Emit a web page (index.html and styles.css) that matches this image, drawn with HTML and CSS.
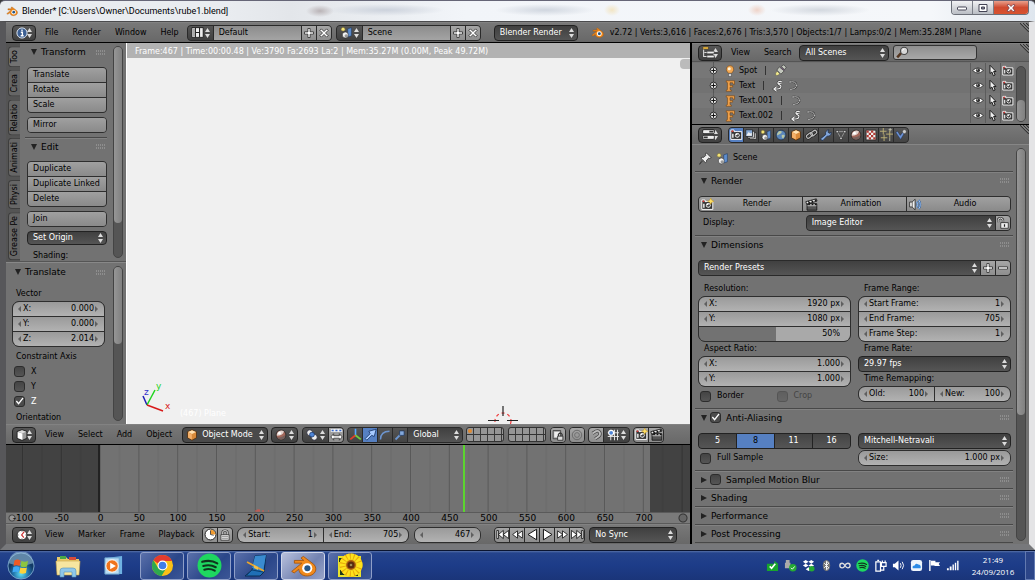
FILE: index.html
```html
<!DOCTYPE html>
<html lang="en">
<head>
<meta charset="utf-8">
<title>Blender* [C:\Users\Owner\Documents\rube1.blend]</title>
<link rel="stylesheet" href="styles.css">
</head>
<body>
<svg class="defs" aria-hidden="true">
  <symbol id="blender" viewBox="0 0 16 16"><path d="M1 11.500 7 6.600H2.600V5h5.600L6.500 3.600l1.400-1L14 7.200c3 3 .5 7-3.800 7-3 0-4.800-1.700-5-4l-2.700 2.200z" fill="#f08a1c" stroke="#a5530a" stroke-width=".5"/><circle cx="10.200" cy="9.600" r="3" fill="#fff"/><circle cx="10.300" cy="9.600" r="1.800" fill="#265787"/></symbol>
  <symbol id="info" viewBox="0 0 16 16"><circle cx="8" cy="8" r="6.800" fill="#3c5f93" stroke="#dfe7f2" stroke-width="1.300"/><path d="M8 3.300v2M6.400 7H8.500v4.500M6.200 11.700h4" stroke="#fff" stroke-width="1.800" fill="none"/></symbol>
  <symbol id="layout" viewBox="0 0 16 16"><path d="M1 2h14v12H1z" fill="#eee" stroke="#111"/><path d="M5.500 2v12M10.500 2v12M5.500 8h5" stroke="#222" stroke-width="1.300"/><path d="M2 3h3v10H2z" fill="#aaa"/></symbol>
  <symbol id="scene" viewBox="0 0 16 16"><path d="M9.500 3.500 14 2v10l-4.500 1.500z" fill="#5f8fd0" stroke="#223a60" stroke-width=".7"/><circle cx="6.500" cy="11" r="3.700" fill="#f4f4f4" stroke="#222" stroke-width=".7"/><circle cx="7.600" cy="12" r="2" fill="#999"/><circle cx="3.800" cy="4" r="2.300" fill="#f3e47a" stroke="#89792a" stroke-width=".6"/></symbol>
  <symbol id="plus" viewBox="0 0 16 16"><path d="M6.500 2h3v4.500H14v3H9.500V14h-3V9.500H2v-3h4.500z" fill="#fff" stroke="#222"/></symbol>
  <symbol id="minus" viewBox="0 0 16 16"><path d="M2 6.500h12v3H2z" fill="#fff" stroke="#222"/></symbol>
  <symbol id="cross" viewBox="0 0 16 16"><path d="m2.500 4.500 2-2L8 6l3.500-3.500 2 2L10 8l3.500 3.500-2 2L8 10l-3.500 3.500-2-2L6 8z" fill="#fff" stroke="#222"/></symbol>
  <symbol id="tree" viewBox="0 0 16 16"><path d="M2 3v10h4M3 8h4" stroke="#ddd" fill="none" stroke-width="1.300"/><path d="M1 1h7v3H1z" fill="#f0b93c" stroke="#222" stroke-width=".6"/><path d="M6 6.500h9v3H6zM6 11.500h9v3H6z" fill="#eee" stroke="#222" stroke-width=".6"/></symbol>
  <symbol id="search" viewBox="0 0 16 16"><path d="m1.500 14 5-5.500" stroke="#53341f" stroke-width="3"/><circle cx="10" cy="6" r="4.400" fill="#d7d7d7" stroke="#444" stroke-width="1.400"/><path d="M8 6q0-2 2-2.200" stroke="#fff" fill="none"/></symbol>
  <symbol id="node" viewBox="0 0 16 16"><circle cx="8" cy="8" r="6" fill="#ddd" stroke="#222" stroke-width="1.600"/><path d="M8 4v8M4 8h8" stroke="#111" stroke-width="1.800"/></symbol>
  <symbol id="lamp" viewBox="0 0 16 16"><path d="M8 .8a5 5 0 0 0-3.500 8.500L6 11h4l1.500-1.700A5 5 0 0 0 8 .8z" fill="#f2a955" stroke="#6f3f10" stroke-width=".7"/><circle cx="7" cy="5" r="2" fill="#fff3d5"/><path d="M6 11.500h4v3.700H6z" fill="#ddd" stroke="#333" stroke-width=".6"/></symbol>
  <symbol id="font" viewBox="0 0 16 16"><path d="M3 1h11v4.800h-1.700L11.500 3.600H8v3.600h3.500v2.300H8v3.300l1.800.7V15H3v-1.500l1.600-.7v-9.300L3 2.800z" fill="#eea04a" stroke="#6b3b0b" stroke-width=".7"/></symbol>
  <symbol id="spot" viewBox="0 0 16 16"><path d="M2 14q-1-3 2-5l3 3q-2 3-5 2z" fill="#f1e98c" stroke="#444" stroke-width=".5"/><path d="m3.500 7.500 3-4 6 5-4 4zM9 3l3-2 3 3-2 3z" fill="#c3c7bd" stroke="#333" stroke-width=".8"/><path d="m8 4 5 4" stroke="#637" stroke-width=".6"/></symbol>
  <symbol id="squig" viewBox="0 0 16 16"><path d="M13 2Q7 1 8 5q3 2 4 3 0 4-5 4H3m3-3-3.500 3L6 15M8 5l5-1" fill="none" stroke="#333" stroke-width="3"/><path d="M13 2Q7 1 8 5q3 2 4 3 0 4-5 4H3m3-3-3.500 3L6 15M8 5l5-1" fill="none" stroke="#eee" stroke-width="1.500"/></symbol>
  <symbol id="curve" viewBox="0 0 16 16"><path d="M4 2.500q8-1 8.500 4T5 12.500" fill="none" stroke="#3c3c3c" stroke-width="2.600"/><path d="M4 2.500q8-1 8.500 4T5 12.500" fill="none" stroke="#ccc" stroke-width="1.200"/><path d="M3 1.500h2.500v2H3zM11.500 6H14v2h-2.500zM4 11.500h2.500v2H4z" fill="#ddd" stroke="#333" stroke-width=".5"/></symbol>
  <symbol id="eye" viewBox="0 0 16 16"><path d="M.8 8Q8 1.200 15.200 8 8 14.800.8 8z" fill="#fff" stroke="#222"/><circle cx="8" cy="7.800" r="2.700" fill="#333"/><circle cx="7" cy="7" r=".8" fill="#fff"/></symbol>
  <symbol id="cursor" viewBox="0 0 16 16"><path d="M4 1v11l2.500-2 2 5 2.300-1-2-4.700H12z" fill="#eee" stroke="#111" stroke-width="1.200"/></symbol>
  <symbol id="camera" viewBox="0 0 16 16"><path d="M1 2.500h4v2h9.500V14H1z" fill="#333" stroke="#fff" stroke-width="1.200"/><path d="M2 3h2v2H2z" fill="#d33"/><circle cx="9" cy="9" r="3.600" fill="#eee" stroke="#111"/><circle cx="9" cy="9" r="1.900" fill="#444"/><circle cx="8.300" cy="8" r="1" fill="#fff"/><path d="M2.500 7h2v5h-2z" fill="#ddd"/></symbol>
  <symbol id="camstar" viewBox="0 0 16 16"><use href="#camera"/><path d="m12 0 1.300 2.700L16 4l-2.700 1.300L12 8l-1.300-2.700L8 4l2.700-1.300z" fill="#ffe066" stroke="#b98b16" stroke-width=".5"/></symbol>
  <symbol id="props" viewBox="0 0 16 16"><rect x=".8" y="2" width="14.400" height="5" rx="1.500" fill="#eee" stroke="#111"/><rect x=".8" y="9" width="14.400" height="5" rx="1.500" fill="#eee" stroke="#111"/><path d="M9 4.500h5M2 11.500h5" stroke="#333" stroke-width="2"/></symbol>
  <symbol id="layers" viewBox="0 0 16 16"><path d="M6 5h9v9H6z" fill="#ccc" stroke="#222"/><path d="M3.500 3h9v9h-9z" fill="#ddd" stroke="#222"/><path d="M1 1h9v9H1z" fill="#87a9d4" stroke="#222"/><path d="m2 8 3-4 2 2 2-1v4H2z" fill="#eee"/></symbol>
  <symbol id="world" viewBox="0 0 16 16"><circle cx="8" cy="8" r="6.500" fill="#5b86bb" stroke="#1e2f47"/><path d="M5 3q4-1 4 1T6 7 4 9L2.500 7zM9 8q4-1 4 1l-2 4-2-2z" fill="#b9c7a4"/></symbol>
  <symbol id="cube" viewBox="0 0 16 16"><path d="m8 1 6 2.700v8L8 15l-6-3.300v-8z" fill="#d98a3a" stroke="#4b2b0c"/><path d="m8 1.800 5.300 2.300L8 6.700 2.700 4.100z" fill="#ffe0b0"/><path d="M2.700 4.500 7.800 7v7L2.700 11.400z" fill="#f4b06a"/></symbol>
  <symbol id="whitecube" viewBox="0 0 16 16"><path d="m8 1 6.500 2.300v9L8 15.300l-6.500-3v-9z" fill="#999" stroke="#111"/><path d="M2.300 4 8.500 6v8.300L2.300 12z" fill="#fff"/><path d="m8 1.800 5.500 2L8.500 5.500 2.800 3.700z" fill="#ddd"/></symbol>
  <symbol id="chain" viewBox="0 0 16 16"><g fill="none" stroke="#222" stroke-width="3.200"><rect x="1.500" y="7" width="8" height="4.500" rx="2.200" transform="rotate(-38 5.500 9.200)"/><rect x="6.700" y="4" width="8" height="4.500" rx="2.200" transform="rotate(-38 10.700 6.200)"/></g><g fill="none" stroke="#bbb" stroke-width="1.500"><rect x="1.500" y="7" width="8" height="4.500" rx="2.200" transform="rotate(-38 5.500 9.200)"/><rect x="6.700" y="4" width="8" height="4.500" rx="2.200" transform="rotate(-38 10.700 6.200)"/></g></symbol>
  <symbol id="wrench" viewBox="0 0 16 16"><path d="M2 15 .8 13 7.500 7.500Q6.500 2 12 1l-1.500 3 1.500 1.700L15 4.500q0 5.500-5.500 5L4 15.200z" fill="#83a8dd" stroke="#1c2c48"/></symbol>
  <symbol id="mesh" viewBox="0 0 16 16"><path d="M3 3.500h10L8 12.500z" fill="none" stroke="#aaa"/><path d="M1.500 2h3v3h-3zM11.500 2h3v3h-3zM6.500 11h3v3h-3z" fill="#ddd" stroke="#111" stroke-width=".7"/></symbol>
  <symbol id="ball" viewBox="0 0 16 16"><circle cx="8" cy="8" r="6.500" fill="#a3675a" stroke="#222"/><path d="M2.500 9A6 6 0 0 1 12 3.200Q10 9 2.500 9z" fill="#e3d3ce"/><circle cx="6" cy="5.500" r="1.800" fill="#fff"/><path d="M3 11q6 1 10.500-3Q13.500 14 8 14.200 4.500 14 3 11z" fill="#74605c"/></symbol>
  <symbol id="checker" viewBox="0 0 16 16"><path d="M1.500 1.500h13v13h-13z" fill="#eee" stroke="#222"/><path d="M2 2h3v3H2zM8 2h3v3H8zM5 5h3v3H5zM11 5h3v3h-3zM2 8h3v3H2zM8 8h3v3H8zM5 11h3v3H5zM11 11h3v3h-3z" fill="#b03a34"/></symbol>
  <symbol id="sparks" viewBox="0 0 16 16"><path d="M4 0v8M0 4h8M12 3v9M7.500 7.500h8.500M5 8v8M1 12h8" stroke="#b9ad74" stroke-width="1.200"/><path d="M12.500 0v4M10.500 2h4M12 12v4" stroke="#c4c4b0"/></symbol>
  <symbol id="physics" viewBox="0 0 16 16"><path d="M1 4.500 3.500 3 7 8.500 10.500 4l2 1.500L7.500 14z" fill="#6d93d6" stroke="#1e2f50" stroke-width=".7"/><circle cx="12.500" cy="3.500" r="2.700" fill="#ccc" stroke="#222" stroke-width=".6"/></symbol>
  <symbol id="pin" viewBox="0 0 16 16"><path d="M9 1l6 6-2 1-1-.5-2.700 2.700q.3 2.200-1.300 3L5 10.300.8 15.200.5 14.800 4.500 9.600 2.300 7.500Q3.500 6 6 6.500L8.500 4 8 3z" fill="#eee" stroke="#222" stroke-width=".9"/></symbol>
  <symbol id="clap" viewBox="0 0 16 16"><path d="M2.500 7h12v8h-12z" fill="#555" stroke="#111"/><path d="M1 4.500 14 1l.8 2.800L2 7.500z" fill="#eee" stroke="#111"/><path d="m4 4 2 2.500M8 3l2 2.500M12 1.800l2 2M5 7v2.500M9 7v2.500M13 7v2.500" stroke="#111" stroke-width="1.600"/><path d="M3 9.500h11M6.500 8h1.500M10.500 8h1.500" stroke="#ddd"/></symbol>
  <symbol id="audio" viewBox="0 0 16 16"><path d="M.8 5h3L7.500 1.500v13L3.800 11h-3z" fill="#eee" stroke="#222"/><path d="M4 5v6" stroke="#555"/><path d="M9.500 4.500q2.200 3.500 0 7M12 2.500q3.700 5.500 0 11" fill="none" stroke="#2f5f9f" stroke-width="2.400"/><path d="M9.500 4.500q2.200 3.500 0 7M12 2.500q3.700 5.500 0 11" fill="none" stroke="#a9c8f0" stroke-width="1.200"/></symbol>
  <symbol id="lockopen" viewBox="0 0 16 16"><path d="M1.500 7V4q0-2.500 3-2.500T8 4v4" fill="none" stroke="#333" stroke-width="3"/><path d="M1.500 7V4q0-2.500 3-2.500T8 4v4" fill="none" stroke="#eee" stroke-width="1.200"/><path d="M5 7.500h10V15H5z" fill="#eee" stroke="#222"/><path d="M10 9.500v3.500" stroke="#222" stroke-width="1.600"/></symbol>
  <symbol id="lock" viewBox="0 0 16 16"><path d="M4.500 8V5q0-3 3.500-3t3.500 3v3" fill="none" stroke="#444" stroke-width="3"/><path d="M4.500 8V5q0-3 3.500-3t3.500 3v3" fill="none" stroke="#ddd" stroke-width="1.200"/><path d="M2.500 7.500h11V15h-11z" fill="#ddd" stroke="#333"/><path d="M4 10h8M4 12.500h8" stroke="#888"/></symbol>
  <symbol id="clock" viewBox="0 0 16 16"><circle cx="8" cy="8" r="6.500" fill="#fff" stroke="#222" stroke-width="1.200"/><path d="m11 3.500-3.500 4.500 3 3.500" fill="none" stroke="#c33" stroke-width="1.600"/><path d="M8 2.500v1M8 12.500v1M2.500 8h1M12.500 8h1" stroke="#333"/></symbol>
  <symbol id="range" viewBox="0 0 16 16"><circle cx="8" cy="8" r="6.700" fill="#fff" stroke="#222" stroke-width="1.200"/><path d="M8 8V2a6 6 0 0 1 6 6z" fill="#f29b2e"/><path d="M8 3v5l4 1" fill="none" stroke="#333"/></symbol>
  <symbol id="pivot" viewBox="0 0 16 16"><circle cx="5" cy="5" r="4" fill="#eee" stroke="#223"/><circle cx="11" cy="11" r="4" fill="#eee" stroke="#223"/><circle cx="8" cy="7.500" r="3.200" fill="#4f86d8" stroke="#1b3970"/></symbol>
  <symbol id="centers" viewBox="0 0 16 16"><path d="M1 3h14" stroke="#eee" stroke-width="3.600"/><path d="M2 3h2.500M6.700 3h2.500M11.500 3H14" stroke="#36c" stroke-width="2"/><path d="m1 11 3.500-4v2.500h7V7L15 11l-3.500 4v-2.500h-7V15z" fill="#fff" stroke="#333" stroke-width="1"/></symbol>
  <symbol id="axes" viewBox="0 0 16 16"><path d="M8 9V1" stroke="#55a6ff" stroke-width="2"/><path d="m8 9-6.500 5" stroke="#e0402a" stroke-width="2.200"/><path d="m8 9 6.500 5" stroke="#72d13d" stroke-width="2.200"/></symbol>
  <symbol id="arrow" viewBox="0 0 16 16"><path d="m1.500 13 6-6-1.500-3 9-2.500-2.500 9-3-1.500-6 6z" fill="#a9cbff" stroke="#0e2a5c" stroke-width=".9"/></symbol>
  <symbol id="arc" viewBox="0 0 16 16"><path d="M2 14Q2 3 14 3" fill="none" stroke="#6c95cf" stroke-width="1.900"/></symbol>
  <symbol id="scale" viewBox="0 0 16 16"><path d="m2 14 7-7" stroke="#6c95cf" stroke-width="2.400"/><path d="M7.500 2.500h6v6h-6z" fill="#84a9dc" stroke="#1e345a"/></symbol>
  <symbol id="scenelock" viewBox="0 0 16 16"><path d="M1.500 2h10v11h-10z" fill="#aaa" stroke="#333"/><path d="M3 4h7v7H3z" fill="#eee"/><path d="M8.500 10V7q2.500-3 5 0v3" fill="none" stroke="#333" stroke-width="1.500"/><path d="M7.500 9.500h7V15h-7z" fill="#ddd" stroke="#222"/></symbol>
  <symbol id="rings" viewBox="0 0 16 16"><circle cx="8" cy="8" r="6.300" fill="none" stroke="#666" stroke-width="1.200"/><circle cx="8" cy="8" r="3.200" fill="#999" stroke="#666"/></symbol>
  <symbol id="magnet" viewBox="0 0 16 16"><path d="m3 7 4-4q3-2 5 .5T12 9l-4 4" fill="none" stroke="#444" stroke-width="4.400" transform="rotate(12 8 8)"/><path d="m3 7 4-4q3-2 5 .5T12 9l-4 4" fill="none" stroke="#bbb" stroke-width="2.500" transform="rotate(12 8 8)"/></symbol>
  <symbol id="snap" viewBox="0 0 16 16"><path d="M1 5h15M1 10h15M5 1v14M10 1v14M14 1v14" stroke="#eee" stroke-width="1.200"/><circle cx="5.500" cy="5" r="3.300" fill="#4f86d8" stroke="#fff" stroke-width="1.600"/></symbol>
  <symbol id="first" viewBox="0 0 16 16"><path d="M1 3h2v10H1zM9 3v10L3 8zM15.500 3v10L9 8z" fill="#fff" stroke="#111"/></symbol>
  <symbol id="prev" viewBox="0 0 16 16"><path d="M8 3.500v9L2 8zM14 3.500v9L8 8z" fill="#fff" stroke="#111"/></symbol>
  <symbol id="back" viewBox="0 0 16 16"><path d="M13 1.500v13L2.500 8z" fill="#fff" stroke="#111" stroke-width="1.200"/></symbol>
  <symbol id="chrome" viewBox="0 0 24 24"><circle cx="12" cy="12" r="11" fill="#fbc116"/><path d="M2.500 6.500A11 11 0 0 1 22 7.200H12a5 5 0 0 0-4.500 3z" fill="#e33b2e"/><path d="M2.500 6.500A11 11 0 0 0 11 23l5-8.500a5 5 0 0 1-8.500 0z" fill="#2da94f"/><circle cx="12" cy="12" r="5.200" fill="#fff"/><circle cx="12" cy="12" r="4" fill="#3f7de8"/></symbol>
  <symbol id="spotify" viewBox="0 0 24 24"><circle cx="12" cy="12" r="11.500" fill="#1ed760"/><path d="M5 8.500q8-2.500 14.500 1.500M6 12.500q6.500-2 12 1.200M7 16q5.500-1.500 10 1" fill="none" stroke="#10351d" stroke-width="2" stroke-linecap="round"/></symbol>
  <symbol id="corner" viewBox="0 0 9 9"><path d="M0 0l9 9M3 0l6 6M6 0l3 3" stroke="#333" stroke-width="1.100"/><path d="M1.500 0 9 7.500M4.500 0 9 4.500" stroke="#aaa" stroke-width=".7"/></symbol>
</svg>

<header class="titlebar">
  <svg class="i12"><use href="#blender"/></svg>
  <h1>Blender* [C:\Users\Owner\Documents\rube1.blend]</h1>
  <div class="winbtns">
    <button aria-label="Minimize"><svg viewBox="0 0 12 8" width="12" height="8"><rect x="1.500" y="3" width="9" height="3" rx="1" fill="#fff" stroke="#445"/></svg></button>
    <button aria-label="Maximize"><svg viewBox="0 0 12 8" width="12" height="8"><path d="M2 .5h8v7H2z" fill="#fff" stroke="#445"/><path d="M4.500 3h3v2h-3z" fill="#889" stroke="#445"/></svg></button>
    <button class="close" aria-label="Close"><svg viewBox="0 0 12 8" width="12" height="8"><path d="m2 1 2-.5 2 2 2-2 2 .5L7.700 4 10 7l-2 .5-2-2-2 2L2 7l2.300-3z" fill="#fff" stroke="#634" stroke-width=".7"/></svg></button>
  </div>
</header>

<main class="app">
  <nav class="bar info">
    <button class="type" aria-label="Editor type: Info"><svg class="i12"><use href="#info"/></svg></button>
    <div class="menus"><a href="#">File</a><a href="#">Render</a><a href="#">Window</a><a href="#">Help</a></div>
    <div class="group idblock">
      <button class="pick" aria-label="Browse screen"><svg class="i13"><use href="#layout"/></svg></button>
      <input aria-label="Screen" value="Default">
      <button aria-label="Add screen"><svg class="i12"><use href="#plus"/></svg></button>
      <button aria-label="Delete screen"><svg class="i12"><use href="#cross"/></svg></button>
    </div>
    <div class="group idblock">
      <button class="pick" aria-label="Browse scene"><svg class="i13"><use href="#scene"/></svg></button>
      <input aria-label="Scene" value="Scene">
      <button aria-label="Add scene"><svg class="i12"><use href="#plus"/></svg></button>
      <button aria-label="Delete scene"><svg class="i12"><use href="#cross"/></svg></button>
    </div>
    <select class="engine" aria-label="Render engine"><option>Blender Render</option></select>
    <svg class="i13 logo"><use href="#blender"/></svg>
    <span class="stats">v2.72 | Verts:3,616 | Faces:2,676 | Tris:3,570 | Objects:1/7 | Lamps:0/2 | Mem:35.28M | Plane</span>
    <svg class="corner"><use href="#corner"/></svg>
  </nav>

  <div class="work">
    <div class="left">
      <section class="view3d">
        <aside class="shelf">
          <div class="tools">
            <div class="tabs"><button class="on">Too</button><button>Crea</button><button>Relatio</button><button>Animati</button><button>Physi</button><button>Grease Pe</button></div>
            <div class="toolcol">
              <h2 class="phead">Transform</h2>
              <div class="stack btns"><button>Translate</button><button>Rotate</button><button>Scale</button></div>
              <div class="stack btns"><button>Mirror</button></div>
              <h2 class="phead rule">Edit</h2>
              <div class="stack btns"><button>Duplicate</button><button>Duplicate Linked</button><button>Delete</button></div>
              <div class="stack btns"><button>Join</button></div>
              <select aria-label="Set Origin"><option>Set Origin</option></select>
              <span class="lbl">Shading:</span>
            </div>
            <div class="scroll s-tools"><i></i></div>
          </div>
          <div class="oper">
            <div class="opcol">
              <h2 class="phead">Translate</h2>
              <span class="lbl vec">Vector</span>
              <div class="stack nums">
                <label class="num"><span>X:</span><input value="0.000"></label>
                <label class="num"><span>Y:</span><input value="0.000"></label>
                <label class="num"><span>Z:</span><input value="2.014"></label>
              </div>
              <span class="lbl axis">Constraint Axis</span>
              <label class="chk"><input type="checkbox">X</label>
              <label class="chk"><input type="checkbox">Y</label>
              <label class="chk lit"><input type="checkbox" checked>Z</label>
              <span class="lbl orient">Orientation</span>
            </div>
            <div class="scroll s-oper"><i></i></div>
          </div>
        </aside>
        <div class="canvas">
          <div class="frameinfo">Frame:467 | Time:00:00.48 | Ve:3790 Fa:2693 La:2 | Mem:35.27M (0.00M, Peak 49.72M)</div>
          <span class="plusmark"></span>
          <svg class="gizmo" width="34" height="34" viewBox="0 0 34 34"><path d="m7 24-4-9" stroke="#1d1db5" stroke-width="1.500"/><path d="m7 24 8-15" stroke="#1fd41f" stroke-width="1.500"/><path d="m7 24 16 6" stroke="#d81919" stroke-width="1.500"/><text x="4" y="14" fill="#3333cc">z</text><text x="16" y="8" fill="#1fd41f">y</text><text x="25" y="28" fill="#d81919">x</text></svg>
          <span class="objname">(467) Plane</span>
          <svg class="cursor3d" width="32" height="20" viewBox="0 0 32 20"><circle cx="16" cy="17" r="8" fill="none" stroke="#e33" stroke-dasharray="3 3" stroke-width="1.200"/><path d="M16 2v10M1 16.500h11M20 16.500h11" stroke="#222" stroke-width="1.200"/></svg>
        </div>
      </section>
      <nav class="bar viewbar">
        <button class="type" aria-label="Editor type: 3D View"><svg class="i12"><use href="#whitecube"/></svg></button>
        <div class="menus"><a href="#">View</a><a href="#">Select</a><a href="#">Add</a><a href="#">Object</a></div>
        <div class="iconsel mode"><svg class="i12"><use href="#cube"/></svg><select aria-label="Mode"><option>Object Mode</option></select></div>
        <button class="pick solo" aria-label="Shading"><svg class="i12"><use href="#ball"/></svg></button>
        <div class="group"><button class="pick" aria-label="Pivot"><svg class="i12"><use href="#pivot"/></svg></button><button aria-label="Manipulate centers"><svg class="i13"><use href="#centers"/></svg></button></div>
        <div class="group dark orientgrp"><button aria-label="Manipulator"><svg class="i13"><use href="#axes"/></svg></button><button class="on" aria-label="Translate manipulator"><svg class="i13"><use href="#arrow"/></svg></button><button aria-label="Rotate manipulator"><svg class="i12"><use href="#arc"/></svg></button><button aria-label="Scale manipulator"><svg class="i12"><use href="#scale"/></svg></button><select aria-label="Orientation"><option>Global</option></select></div>
        <div class="lay"><span class="dot"></span></div>
        <div class="lay"></div>
        <div class="group"><button aria-label="Lock to scene"><svg class="i12"><use href="#scenelock"/></svg></button></div>
        <div class="group"><button aria-label="Proportional editing"><svg class="i12"><use href="#rings"/></svg></button></div>
        <div class="group"><button aria-label="Snap"><svg class="i12"><use href="#magnet"/></svg></button><button class="pick" aria-label="Snap element"><svg class="i12"><use href="#snap"/></svg></button></div>
        <div class="group"><button aria-label="Render preview"><svg class="i13"><use href="#camstar"/></svg></button><button aria-label="Render animation preview"><svg class="i13"><use href="#clap"/></svg></button></div>
      </nav>
      <section class="timeline">
        <svg class="tgrid" viewBox="0 0 684 67" preserveAspectRatio="none">
          <defs>
            <pattern id="ticks" x="16" width="38.800" height="67" patternUnits="userSpaceOnUse"><path d="M.5 0v67" stroke="#595959"/><path d="M19.900 0v67" stroke="#696969"/></pattern>
            <pattern id="dticks" x="16" width="38.800" height="67" patternUnits="userSpaceOnUse"><path d="M.5 0v67" stroke="#333"/><path d="M19.900 0v67" stroke="#3c3c3c"/></pattern>
          </defs>
          <rect width="684" height="67" fill="#727272"/><rect width="684" height="67" fill="url(#ticks)"/>
          <rect width="93" height="67" fill="#424242"/><rect width="93" height="67" fill="url(#dticks)"/><rect x="92" width="2" height="67" fill="#222"/>
          <rect x="644" width="40" height="67" fill="#424242"/><rect x="644" width="40" height="67" fill="url(#dticks)"/>
          <rect x="457" width="2" height="67" fill="#5bd52f"/>
          <path d="M249 66h5m2 0h2m4 0h1M251 65h3" stroke="#d8544a"/>
        </svg>
        <div class="ruler"><span>-100</span><span>-50</span><span>0</span><span>50</span><span>100</span><span>150</span><span>200</span><span>250</span><span>300</span><span>350</span><span>400</span><span>450</span><span>500</span><span>550</span><span>600</span><span>650</span><span>700</span></div>
      </section>
      <nav class="bar timebar">
        <button class="type" aria-label="Editor type: Timeline"><svg class="i12"><use href="#clock"/></svg></button>
        <div class="menus"><a href="#">View</a><a href="#">Marker</a><a href="#">Frame</a><a href="#">Playback</a></div>
        <div class="group"><button aria-label="Use preview range"><svg class="i13"><use href="#range"/></svg></button><button aria-label="Lock time cursor"><svg class="i12"><use href="#lock"/></svg></button></div>
        <div class="stack pair startend"><label class="num"><span>Start:</span><input value="1"></label><label class="num"><span>End:</span><input value="705"></label></div>
        <div class="stack cur"><label class="num"><input aria-label="Current frame" value="467"></label></div>
        <div class="group play">
          <button aria-label="Jump to start"><svg class="i13"><use href="#first"/></svg></button><button aria-label="Previous keyframe"><svg class="i13"><use href="#prev"/></svg></button><button aria-label="Play backwards"><svg class="i13"><use href="#back"/></svg></button><button aria-label="Play"><svg class="i13 flip"><use href="#back"/></svg></button><button aria-label="Next keyframe"><svg class="i13 flip"><use href="#prev"/></svg></button><button aria-label="Jump to end"><svg class="i13 flip"><use href="#first"/></svg></button>
        </div>
        <select class="sync" aria-label="Sync mode"><option>No Sync</option></select>
      </nav>
    </div>

    <div class="right">
      <nav class="bar outbar">
        <button class="type" aria-label="Editor type: Outliner"><svg class="i13"><use href="#tree"/></svg></button>
        <div class="menus"><a href="#">View</a><a href="#">Search</a></div>
        <select class="scenes" aria-label="Display mode"><option>All Scenes</option></select>
        <label class="find"><svg class="i13"><use href="#search"/></svg><input type="search" aria-label="Filter"></label>
        <svg class="corner"><use href="#corner"/></svg>
      </nav>
      <section class="outliner">
        <ul>
          <li><svg class="i9"><use href="#node"/></svg><svg class="i12"><use href="#lamp"/></svg><span class="name">Spot</span><span class="sep"></span><svg class="i13"><use href="#spot"/></svg><span class="vis"><svg class="i12"><use href="#eye"/></svg><svg class="i12"><use href="#cursor"/></svg><svg class="i12"><use href="#camera"/></svg></span></li>
          <li><svg class="i9"><use href="#node"/></svg><svg class="i12"><use href="#font"/></svg><span class="name">Text</span><span class="sep"></span><svg class="i12"><use href="#squig"/></svg><svg class="i12"><use href="#curve"/></svg><span class="vis"><svg class="i12"><use href="#eye"/></svg><svg class="i12"><use href="#cursor"/></svg><svg class="i12"><use href="#camera"/></svg></span></li>
          <li><svg class="i9"><use href="#node"/></svg><svg class="i12"><use href="#font"/></svg><span class="name">Text.001</span><span class="sep"></span><svg class="i12"><use href="#curve"/></svg><span class="vis"><svg class="i12"><use href="#eye"/></svg><svg class="i12"><use href="#cursor"/></svg><svg class="i12"><use href="#camera"/></svg></span></li>
          <li><svg class="i9"><use href="#node"/></svg><svg class="i12"><use href="#font"/></svg><span class="name">Text.002</span><span class="sep"></span><svg class="i12"><use href="#squig"/></svg><svg class="i12"><use href="#curve"/></svg><span class="vis"><svg class="i12"><use href="#eye"/></svg><svg class="i12"><use href="#cursor"/></svg><svg class="i12"><use href="#camera"/></svg></span></li>
        </ul>
        <div class="scroll s-out"><i></i></div>
      </section>
      <nav class="bar propbar">
        <button class="type" aria-label="Editor type: Properties"><svg class="i13"><use href="#props"/></svg></button>
        <div class="group dark ctx">
          <button class="on" aria-label="Render"><svg class="i13"><use href="#camera"/></svg></button><button aria-label="Render layers"><svg class="i12"><use href="#layers"/></svg></button><button aria-label="Scene"><svg class="i12"><use href="#scene"/></svg></button><button aria-label="World"><svg class="i12"><use href="#world"/></svg></button><button aria-label="Object"><svg class="i12"><use href="#cube"/></svg></button><button aria-label="Constraints"><svg class="i13"><use href="#chain"/></svg></button><button aria-label="Modifiers"><svg class="i12"><use href="#wrench"/></svg></button><button aria-label="Data"><svg class="i12"><use href="#mesh"/></svg></button><button aria-label="Material"><svg class="i12"><use href="#ball"/></svg></button><button aria-label="Texture"><svg class="i12"><use href="#checker"/></svg></button><button aria-label="Particles"><svg class="i13"><use href="#sparks"/></svg></button><button aria-label="Physics"><svg class="i12"><use href="#physics"/></svg></button>
        </div>
        <svg class="corner"><use href="#corner"/></svg>
      </nav>
      <section class="props">
        <div class="panels">
          <div class="crumb"><svg class="i13"><use href="#pin"/></svg><svg class="i13"><use href="#scene"/></svg><span>Scene</span></div>
          <h2 class="phead rule">Render</h2>
          <div class="pbody">
            <div class="stack three"><button><svg class="i13"><use href="#camstar"/></svg><span>Render</span></button><button><svg class="i13"><use href="#clap"/></svg><span>Animation</span></button><button><svg class="i13"><use href="#audio"/></svg><span>Audio</span></button></div>
            <div class="disp"><label for="display">Display:</label><div class="group grow"><select id="display"><option>Image Editor</option></select><button aria-label="Lock interface"><svg class="i12"><use href="#lockopen"/></svg></button></div></div>
          </div>
          <h2 class="phead rule">Dimensions</h2>
          <div class="pbody">
            <div class="group grow presets"><select aria-label="Render Presets"><option>Render Presets</option></select><button aria-label="Add preset"><svg class="i12"><use href="#plus"/></svg></button><button aria-label="Remove preset"><svg class="i12"><use href="#minus"/></svg></button></div>
            <div class="cols">
              <div class="col">
                <span class="lbl">Resolution:</span>
                <div class="stack nums"><label class="num"><span>X:</span><input value="1920 px"></label><label class="num"><span>Y:</span><input value="1080 px"></label><label class="num slider"><input aria-label="Percentage" value="50%"></label></div>
                <span class="lbl">Aspect Ratio:</span>
                <div class="stack nums"><label class="num"><span>X:</span><input value="1.000"></label><label class="num"><span>Y:</span><input value="1.000"></label></div>
                <div class="two"><label class="chk"><input type="checkbox">Border</label><label class="chk off"><input type="checkbox" disabled>Crop</label></div>
              </div>
              <div class="col">
                <span class="lbl">Frame Range:</span>
                <div class="stack nums"><label class="num"><span>Start Frame:</span><input value="1"></label><label class="num"><span>End Frame:</span><input value="705"></label><label class="num"><span>Frame Step:</span><input value="1"></label></div>
                <span class="lbl">Frame Rate:</span>
                <select aria-label="Frame Rate"><option>29.97 fps</option></select>
                <span class="lbl">Time Remapping:</span>
                <div class="stack pair"><label class="num"><span>Old:</span><input value="100"></label><label class="num"><span>New:</span><input value="100"></label></div>
              </div>
            </div>
          </div>
          <h2 class="phead rule"><label class="chk"><input type="checkbox" checked>Anti-Aliasing</label></h2>
          <div class="pbody">
            <div class="cols">
              <div class="col aa">
                <div class="seg"><label><input type="radio" name="aa">5</label><label><input type="radio" name="aa" checked>8</label><label><input type="radio" name="aa">11</label><label><input type="radio" name="aa">16</label></div>
                <label class="chk"><input type="checkbox">Full Sample</label>
              </div>
              <div class="col aa">
                <select aria-label="Filter"><option>Mitchell-Netravali</option></select>
                <div class="stack pair"><label class="num"><span>Size:</span><input value="1.000 px"></label></div>
              </div>
            </div>
          </div>
          <h2 class="phead rule shut"><label class="chk"><input type="checkbox">Sampled Motion Blur</label></h2>
          <h2 class="phead rule shut">Shading</h2>
          <h2 class="phead rule shut">Performance</h2>
          <h2 class="phead rule shut">Post Processing</h2>
          <div class="endrule"></div>
        </div>
        <div class="scroll s-props"><i></i></div>
      </section>
    </div>
  </div>
</main>

<footer class="taskbar">
  <button class="start" aria-label="Start"><svg viewBox="0 0 30 30" width="28" height="28"><defs><radialGradient id="orb" cy=".8"><stop offset="0" stop-color="#5fe0f5"/><stop offset=".6" stop-color="#1f6fa8"/><stop offset="1" stop-color="#123a66"/></radialGradient></defs><circle cx="15" cy="15" r="14" fill="url(#orb)" stroke="#7aa6cc"/><path d="M2 12a13 13 0 0 1 26 0Q15 17 2 12z" fill="#9fc4dc" opacity=".55"/><path d="M8 9q3-2 6.500 0l-1 6q-3-1.500-6.500 0z" fill="#ee5a24"/><path d="M15.500 9.500q3.500 2 7 0l-1 6q-3.500 1.500-7 0z" fill="#8cc63f"/><path d="M6.800 16q3-1.500 6.500 0l-1 6q-3-1.500-6.500 0z" fill="#3fa9f5"/><path d="M14.300 16.500q3.500 1.500 7 0l-1 6q-3.500 1.500-7 0z" fill="#fbd13b"/></svg></button>
  <button class="app-l" aria-label="Explorer"><svg viewBox="0 0 26 24" width="26" height="24"><path d="M2 3h9l2 2h11v15H2z" fill="#e8c96a"/><path d="M5 2h6v3H5z" fill="#48a848"/><path d="M14 3h7v3h-7z" fill="#d84b3a"/><path d="M1 7h24l-1 14H2z" fill="#f7e6a0" stroke="#c9a548" stroke-width=".6"/><path d="M5 23v-6q0-3 3-3h10q3 0 3 3v6h-4v-5H9v5z" fill="#8ec7ea" stroke="#5590bb" stroke-width=".6"/></svg></button>
  <button class="app-l" aria-label="Media Player"><svg viewBox="0 0 22 22" width="21" height="21"><path d="M5 3 20 1v19H5z" fill="#6fb2e2"/><path d="M2 3h15v17H2z" fill="#b8dcf3" stroke="#6ba3cf"/><circle cx="9.500" cy="11.500" r="6.500" fill="#f0741c" stroke="#fff"/><path d="m7.500 8 6 3.500-6 3.500z" fill="#fff"/></svg></button>
  <button class="task first" aria-label="Chrome"><svg class="i23"><use href="#chrome"/></svg></button>
  <button class="task" aria-label="Spotify"><svg class="i25"><use href="#spotify"/></svg></button>
  <button class="task" aria-label="Editor"><svg viewBox="0 0 24 24" width="24" height="24"><path d="M11 2 22 1l-2 17-4 4H1l7-6z" fill="#1f6fb5" stroke="#0b2f55"/><path d="M11 2 8 14l11 3 3-16z" fill="#3a8bd0"/><path d="m3 8 17 9" stroke="#e8a52c" stroke-width="1.800"/><path d="m10 11 4 2v3l-4-2z" fill="#f0c04a"/><path d="m3 21 5-5 11 2" stroke="#0b3f6f" fill="none"/></svg></button>
  <button class="task live" aria-label="Blender"><svg class="i27"><use href="#blender"/></svg></button>
  <button class="task" aria-label="Sunflower"><svg viewBox="0 0 26 26" width="26" height="26"><path d="M1 3h23v21H1z" fill="#e7e22e"/><path d="M2 5h4v4H2zM3 17h5v5H3zM14 21h7v2h-7z" fill="#1e3a1a"/><circle cx="14" cy="12" r="8.500" fill="none" stroke="#e8a80c" stroke-width="6"/><circle cx="14" cy="12" r="8.500" fill="none" stroke="#fde21c" stroke-width="6" stroke-dasharray="2.600 1"/><circle cx="14" cy="12" r="5" fill="#b5600e"/><circle cx="14" cy="12" r="3.600" fill="#5a2b10"/><circle cx="14" cy="12" r="1.300" fill="#9a8a5a"/></svg></button>
  <div class="tray">
    <svg viewBox="0 0 14 14"><path d="M1 5h8V2l4 3v8H1z" fill="#18a52c"/><path d="m4 8 2 2 4-5" stroke="#fff" stroke-width="1.700" fill="none"/></svg>
    <svg viewBox="0 0 14 14"><path d="M2 1h4v3h1v6H1V4h1z" fill="#aaa"/><circle cx="9.500" cy="9.500" r="4" fill="#25a934"/><path d="m7.500 9.500 1.500 1.500 2.500-3" stroke="#fff" fill="none"/></svg>
    <svg viewBox="0 0 14 14"><path d="m4 1 3 2-3 2-3-2zM10 1l3 2-3 2-3-2zM4 5l3 2-3 2-3-2zM10 5l3 2-3 2-3-2zM7 9l3 2-3 2-3-2z" fill="#fff"/><circle cx="10.500" cy="10.500" r="3" fill="#25a934"/></svg>
    <svg viewBox="0 0 14 14"><ellipse cx="7" cy="7" rx="4" ry="6" fill="#777"/><path d="m4.500 4.500 5 5L7 11.500v-9l2.500 2-5 5" fill="none" stroke="#fff"/></svg>
    <svg viewBox="0 0 14 14"><path d="M4.500 4.500a2.500 2.500 0 0 0 0 5q2 0 3-2.500t3-2.500a2 2 0 0 1 0 5q-1.500 0-3-2.500T4.500 4.500z" fill="none" stroke="#ddd" stroke-width="1.500"/></svg>
    <svg viewBox="0 0 24 24"><use href="#spotify"/></svg>
    <svg viewBox="0 0 14 14"><path d="M2 3h5v10H2zM3.500 1.500h2" fill="none" stroke="#fff" stroke-width="1.300"/><path d="M8 4h5v4h-5zM9 1.500V4M12 1.500V4M10.500 8v4H7" fill="none" stroke="#fff" stroke-width="1.300"/></svg>
    <svg viewBox="0 0 14 14"><path d="M1 5h2l4-3.500v11L3 9H1z" fill="#fff"/><path d="M9 4.500q1.500 2.500 0 5M11 3q3 4 0 8" fill="none" stroke="#fff"/></svg>
    <svg viewBox="0 0 14 14"><rect x="1" y="1" width="12" height="12" rx="2.500" fill="#eef5fc"/><path d="M3 10q-1-3 2-3 1-3 4-1 3 0 2.500 4z" fill="#2c8be6"/></svg>
    <svg viewBox="0 0 14 14"><path d="M2 1v12" stroke="#fff" stroke-width="1.500"/><path d="M3 2h5v1.500h5l-1.500 2 1.500 2H7V7H3z" fill="#fff"/></svg>
    <svg viewBox="0 0 14 14"><path d="M1 12h2v-2H1zM4 12h2V8H4zM7 12h1.500V6H7zM9.500 12H11V4H9.500zM12 12h1.500V2H12z" fill="#fff"/></svg>
  </div>
  <time class="clock"><span>21:49</span><span>24/09/2016</span></time>
  <button class="desk" aria-label="Show desktop"></button>
</footer>
</body>
</html>
```
FILE: styles.css
```css
:root {
  --ui: "DejaVu Sans", Verdana, sans-serif;
  --panel: #727272;
  --arrows: url("data:image/svg+xml,%3Csvg xmlns='http://www.w3.org/2000/svg' width='5' height='10'%3E%3Cpath d='M0 4 2.500 0 5 4zM0 6 2.500 10 5 6z' fill='%23ddd'/%3E%3C/svg%3E");
  --la: url("data:image/svg+xml,%3Csvg xmlns='http://www.w3.org/2000/svg' width='3' height='6'%3E%3Cpath d='M3 0v6L0 3z' fill='%23606060'/%3E%3C/svg%3E");
  --ra: url("data:image/svg+xml,%3Csvg xmlns='http://www.w3.org/2000/svg' width='3' height='6'%3E%3Cpath d='M0 0v6l3-3z' fill='%23606060'/%3E%3C/svg%3E");
  --grip: url("data:image/svg+xml,%3Csvg xmlns='http://www.w3.org/2000/svg' width='9' height='5'%3E%3Cpath d='M0 1h9M0 4h9' stroke='%23aaa' stroke-dasharray='1 1'/%3E%3C/svg%3E");
}
* { box-sizing: border-box; margin: 0; padding: 0; }
body { min-height: 100vh; display: flex; flex-direction: column; font: 8px/12px var(--ui); color: #000; background: #3b3b3d; overflow: hidden; }
button, input, select { font: inherit; color: inherit; border: 0; background: none; min-width: 0; appearance: none; border-radius: 0; }
button { display: flex; align-items: center; justify-content: center; }
a { color: inherit; text-decoration: none; }
ul { list-style: none; }
svg { flex: none; display: block; }
.defs { width: 0; height: 0; position: absolute; }
.i9 { width: 9px; height: 9px; }
.i12 { width: 12px; height: 12px; }
.i13 { width: 13px; height: 13px; }
.i23 { width: 23px; height: 23px; }
.i25 { width: 25px; height: 25px; }
.i27 { width: 27px; height: 27px; }
.flip { transform: scaleX(-1); }

.titlebar { height: 21px; display: flex; align-items: center; gap: 4px; padding: 0 6px; border-top: 1px solid #667; border-radius: 5px 5px 0 0;
  background:
    radial-gradient(ellipse 14px 6px at 320px 10px, #b9b3b6, transparent),
    radial-gradient(ellipse 60px 6px at 385px 9px, #ccd2dc, transparent),
    radial-gradient(ellipse 50px 6px at 545px 9px, #d0d6df, transparent),
    radial-gradient(ellipse 8px 6px at 612px 9px, #f2e5c4, transparent),
    radial-gradient(ellipse 50px 6px at 820px 9px, #d3d8df, transparent),
    radial-gradient(ellipse 9px 6px at 757px 9px, #efd3c8, transparent),
    linear-gradient(90deg, #e9ecf0, #e9ecf0 22%, #e3e6ea 28%, #f2f5f9 45%, #f5f7fa 90%, #dfe6ee);
}
.titlebar h1 { font: 9px/14px Roboto, "Open Sans", sans-serif; flex: 1; white-space: nowrap; }
.winbtns { display: flex; align-self: flex-start; border: 1px solid #6b6f78; border-top: 0; border-radius: 0 0 4px 4px; overflow: hidden; }
.winbtns button { width: 21px; height: 13px; background: linear-gradient(#f2f2f4, #b9bdc4); border-right: 1px solid #7b7f88; }
.winbtns .close { width: 34px; border: 0; background: linear-gradient(#e9a08c, #cf4a30 50%, #d8532f); }

.app { flex: 1; display: flex; flex-direction: column; border: solid; border-width: 1px 6px 6px; border-color: #4b4b4d #e4e4e6 #77787b #57575a; }
.work { flex: 1; display: grid; grid-template-columns: 684fr 337fr; gap: 2px; background: #000; border-top: 1px solid #000; }
.left, .right { display: flex; flex-direction: column; min-width: 0; min-height: 0; }

.bar { display: flex; align-items: center; padding: 0 0 0 6px; background: linear-gradient(#787878, #686868); white-space: nowrap; border-top: 1px solid #828282; }
.info, .viewbar, .timebar { height: 20px; }
.outbar { height: 19px; border-bottom: 1px solid #555; }
.corner { width: 9px; height: 9px; margin-left: auto; align-self: flex-start; }
.menus { display: flex; gap: 14px; padding: 0 8px 0 9px; }
.type, .pick { flex: none; width: 24px; height: 16px; justify-content: flex-start; padding-left: 3px; border: 1px solid #222; border-radius: 4px; background: var(--arrows) right 3px center no-repeat, linear-gradient(#555, #404040); }
.group { display: flex; border: 1px solid #2a2a2a; border-radius: 4px; overflow: hidden; height: 16px; background: #2a2a2a; gap: 1px; }
.group > button { width: 14px; height: 14px; background: linear-gradient(#a6a6a6, #8e8e8e); border: 0; border-radius: 0; }
.group > .pick { width: 25px; background: var(--arrows) right 3px center no-repeat, linear-gradient(#555, #404040); }
.group input { background: linear-gradient(#8c8c8c, #a4a4a4); padding-left: 5px; }
.idblock { width: 145px; margin-right: 4px; }
.idblock input { flex: 1; }
.dark > button { background: linear-gradient(#555, #444); }
.dark > .on { background: #5680c2; }
select { height: 16px; border: 1px solid #222; border-radius: 4px; padding: 0 12px 0 5px; color: #fff; background: var(--arrows) right 3px center no-repeat, linear-gradient(#404040, #555); }
.group select { flex: 1; height: 14px; border: 0; border-radius: 0; }
.engine { width: 84px; margin: 0 13px 0 9px; }
.stats { margin-left: 6px; }

.view3d { flex: 1 1 0; min-height: 0; display: flex; background: #f0f0f0; }
.shelf { width: 120px; display: flex; flex-direction: column; background: var(--panel); }
.tools { height: 219px; display: flex; border-bottom: 1px solid #555; overflow: hidden; }
.oper { flex: 1 1 0; min-height: 0; display: flex; border-top: 1px solid #888; overflow: hidden; }
.tabs { width: 14px; padding: 3px 0 0 2px; background: #545454; display: flex; flex-direction: column; gap: 3px; flex: none; }
.tabs button { writing-mode: vertical-rl; transform: rotate(180deg); width: 12px; padding: 3px 0; border: 1px solid #3d3d3d; border-left: 0; border-radius: 0 4px 4px 0; background: #666; line-height: 10px; white-space: nowrap; }
.tabs .on { background: var(--panel); }
.toolcol { flex: 1; padding-left: 5px; display: flex; flex-direction: column; gap: 4px; }
.phead { height: 18px; display: flex; align-items: center; font: 9px/12px var(--ui); flex: none; background: var(--grip) right 2px center no-repeat; white-space: nowrap; }
.phead::before { content: ""; border: solid transparent; border-width: 6px 3px 0; border-top-color: #222; margin: 0 4px 0 6px; }
.shut::before { border-width: 3px 0 3px 6px; border-left-color: #222; border-top-color: transparent; }
.rule { border-top: 1px solid #484848; box-shadow: inset 0 1px #828282; }
.toolcol .phead { margin-bottom: 2px; }
.toolcol > .stack, .toolcol > select { margin-left: 2px; }
.toolcol > .lbl { padding-left: 8px; }
.stack { border: 1px solid #2e2e2e; border-radius: 4px; overflow: hidden; background: #2e2e2e; display: flex; flex-direction: column; gap: 1px; flex: none; }
.stack button { height: 14px; background: linear-gradient(#a0a0a0, #8a8a8a); }
.btns button { justify-content: flex-start; padding-left: 5px; }
.nums, .pair, .cur { border-radius: 7px; }
.num { height: 14px; display: flex; align-items: center; padding: 0 10px; background: var(--la) 5px center no-repeat, var(--ra) right 6px center no-repeat, linear-gradient(#9a9a9a, #b2b2b2); white-space: nowrap; min-width: 0; }
.num input { flex: 1; width: 10px; text-align: right; }
.slider { background: linear-gradient(90deg, #727272 51%, #a9a9a9 51%); }
.pair { flex-direction: row; }
.pair .num { flex: 1; }
.lbl { line-height: 14px; padding-left: 6px; display: block; flex: none; }
.scroll { width: 10px; margin: 3px 3px; border: 1px solid #444; border-radius: 5px; background: #555; flex: none; display: flex; }
.scroll i { flex: 1; border-radius: 4px; background: linear-gradient(90deg, #969696, #808080); align-self: flex-start; }
.s-tools { margin-left: 6px; }
.s-tools i { height: 84%; }
.s-oper { margin-left: 8px; }
.s-oper i { height: 50%; }
.s-out { margin: 4px 3px 2px 1px; }
.s-out i { height: 38%; align-self: flex-end; }
.s-props i { height: 68%; }

.opcol { flex: 1; padding: 0 0 0 6px; }
.opcol .phead { margin-left: -3px; background-position: right 0 center; }
.opcol .lbl { padding-left: 4px; }
.vec { margin-top: 6px; }
.axis { margin-top: 3px; }
.opcol .chk { height: 15px; padding-left: 2px; }
.orient { margin-top: 2px; }
.chk { display: flex; align-items: center; gap: 6px; }
.chk input { width: 11px; height: 11px; border: 1px solid #2c2c2c; border-radius: 3px; background: linear-gradient(#444, #555); flex: none; }
.chk input:checked { background: url("data:image/svg+xml,%3Csvg xmlns='http://www.w3.org/2000/svg' viewBox='0 0 10 10'%3E%3Cpath d='m1.500 4.500 2.500 3L9 1' stroke='white' stroke-width='1.500' fill='none'/%3E%3C/svg%3E"), #4c4c4c; }
.lit { color: #fff; }
.off { color: #444; }
.off input { opacity: .4; }

.canvas { flex: 1; position: relative; overflow: hidden; border-left: 1px solid #fff; }
.frameinfo { height: 15px; line-height: 17px; padding-left: 8px; color: #fff; background: #b2b2b2; white-space: nowrap; }
.plusmark { position: absolute; right: 0; top: 16px; width: 10px; height: 10px; background: #bbb; border-radius: 4px 0 0 4px; }
.gizmo { position: absolute; left: 13px; bottom: 9px; overflow: visible; font: 9px var(--ui); }
.objname { position: absolute; left: 53px; bottom: 4px; color: #fff; }
.cursor3d { position: absolute; left: 64%; bottom: 0; }

.iconsel { display: flex; align-items: center; height: 16px; border: 1px solid #222; border-radius: 4px; background: #4a4a4a; padding-left: 3px; overflow: hidden; }
.iconsel select { border: 0; flex: 1; background: var(--arrows) right 3px center no-repeat; padding-left: 4px; }
.mode { width: 86px; margin: 0 3px 0 2px; }
.solo { width: 27px; margin-right: 4px; }
.viewbar .group { margin-right: 3px; }
.orientgrp { width: 116px; }
.lay { width: 38px; height: 15px; margin-right: 4px; border: 1px solid #333; border-radius: 3px; padding: 1px; flex: none; background: linear-gradient(#333, #333) 0 6px / 100% 1px no-repeat, repeating-linear-gradient(90deg, #969696 0 6px, #3a3a3a 6px 7px); }
.dot { display: block; width: 4px; height: 4px; border-radius: 2px; background: #e08a30; }

.timeline { border-top: 1px solid #000; background: var(--panel); }
.tgrid { width: 100%; height: 67px; }
.ruler { display: grid; grid-template-columns: repeat(17, 1fr); height: 12px; line-height: 11px; padding-right: 24px; text-align: center; overflow: hidden; border: solid #5a5a5a; border-width: 1px 0; font-size: 9px; background: radial-gradient(circle at 6px 5px, #999 2px, #444 3px, transparent 4px), radial-gradient(circle at calc(100% - 7px) 5px, #666 3px, #333 4px, transparent 5px), #7a7a7a; }
.ruler span { margin-left: -5px; }
.timebar .group { margin-right: 4px; }
.startend { width: 172px; margin-right: 5px; }
.cur { width: 67px; margin-right: 13px; }
.sync { width: 88px; }

.scenes { width: 90px; margin-right: 4px; }
.find { display: flex; align-items: center; width: 84px; height: 15px; border: 1px solid #333; border-radius: 3px; background: linear-gradient(#8e8e8e, #a8a8a8); padding-left: 2px; }
.find input { flex: 1; }
.outliner { display: flex; height: 62px; background: var(--panel); overflow: hidden; }
.outliner ul { flex: 1; padding-top: 1px; background: linear-gradient(#555, #555) 21px 0 / 1px 54px no-repeat; }
.outliner li { display: flex; align-items: center; height: 15px; padding-left: 17px; }
.outliner li:nth-child(odd) { background: #ffffff0a; }
.outliner li > svg:nth-child(2) { margin: 0 3px 0 6px; }
.sep { width: 1px; height: 9px; background: #333; margin: 0 8px; }
.outliner li > .sep ~ svg { margin-right: 3px; }
.vis { margin-left: auto; display: flex; align-self: stretch; }
.vis svg { width: 15px; height: 15px; padding: 1px; border-left: 1px solid #5c5c5c; }
.propbar { border-top: 1px solid #000; height: 20px; }
.ctx { margin-left: 6px; }
.props { flex: 1 1 0; min-height: 0; display: flex; background: var(--panel); border-top: 1px solid #868686; overflow: hidden; }
.panels { flex: 1; padding-left: 3px; min-width: 0; }
.panels > .phead { background-position: right 0 center; background-origin: content-box; padding-right: 4px; }
.crumb { height: 26px; display: flex; align-items: center; gap: 4px; padding-left: 4px; }
.pbody { padding: 7px 2px 4px 3px; }
.three { flex-direction: row; margin-bottom: 3px; }
.three button { flex: 1; padding: 0 2px; }
.three span { flex: 1; text-align: center; }
.disp { display: grid; grid-template-columns: 1fr 2fr; align-items: center; padding-left: 5px; }
.presets { margin-bottom: 6px; }
.cols { display: grid; grid-template-columns: 1fr 1fr; gap: 7px; }
.col { display: flex; flex-direction: column; }
.aa { gap: 1px; }
.two { display: grid; grid-template-columns: 1fr 1fr; height: 17px; align-items: end; }
.col .chk { padding-left: 2px; height: 16px; }
.phead .chk { gap: 5px; }
.phead .chk input { margin-left: -1px; }
.seg { display: flex; gap: 1px; height: 16px; border: 1px solid #222; border-radius: 4px; overflow: hidden; background: #222; }
.seg label { flex: 1; text-align: center; line-height: 14px; color: #fff; background: linear-gradient(#444, #555); }
.seg label:has(:checked) { background: #5680c2; color: #000; }
.seg input { position: absolute; opacity: 0; width: 1px; height: 1px; }
.endrule { border-top: 1px solid #484848; }

.taskbar { height: 30px; display: flex; align-items: center; border-top: 1px solid #0b1530; background: linear-gradient(#5570a8, #24438c 2px, #1d3c88 50%, #1a3579); }
.start { margin: 0 20px 0 7px; }
.app-l { width: 26px; margin-right: 19px; }
.task { width: 44px; height: 28px; margin-right: 3px; border: 1px solid #8f9fc8; border-radius: 3px; background: linear-gradient(135deg, #5a70aa, #2a4689 60%, #3c5696); flex: none; }
.first { margin-left: -5px; }
.live { background: linear-gradient(135deg, #b8c0dc, #7383b2 60%, #98a4c8); border-color: #cfd6ea; }
.tray { margin-left: auto; display: flex; gap: 5px; }
.tray svg { width: 13px; height: 13px; }
.clock { width: 64px; display: flex; flex-direction: column; align-items: center; color: #fff; font: 8px/12px "Open Sans", "Noto Sans", sans-serif; margin: 0 0 0 2px; }
.desk { width: 10px; height: 29px; border: 1px solid #6279b0; background: #2c4588; }
```
